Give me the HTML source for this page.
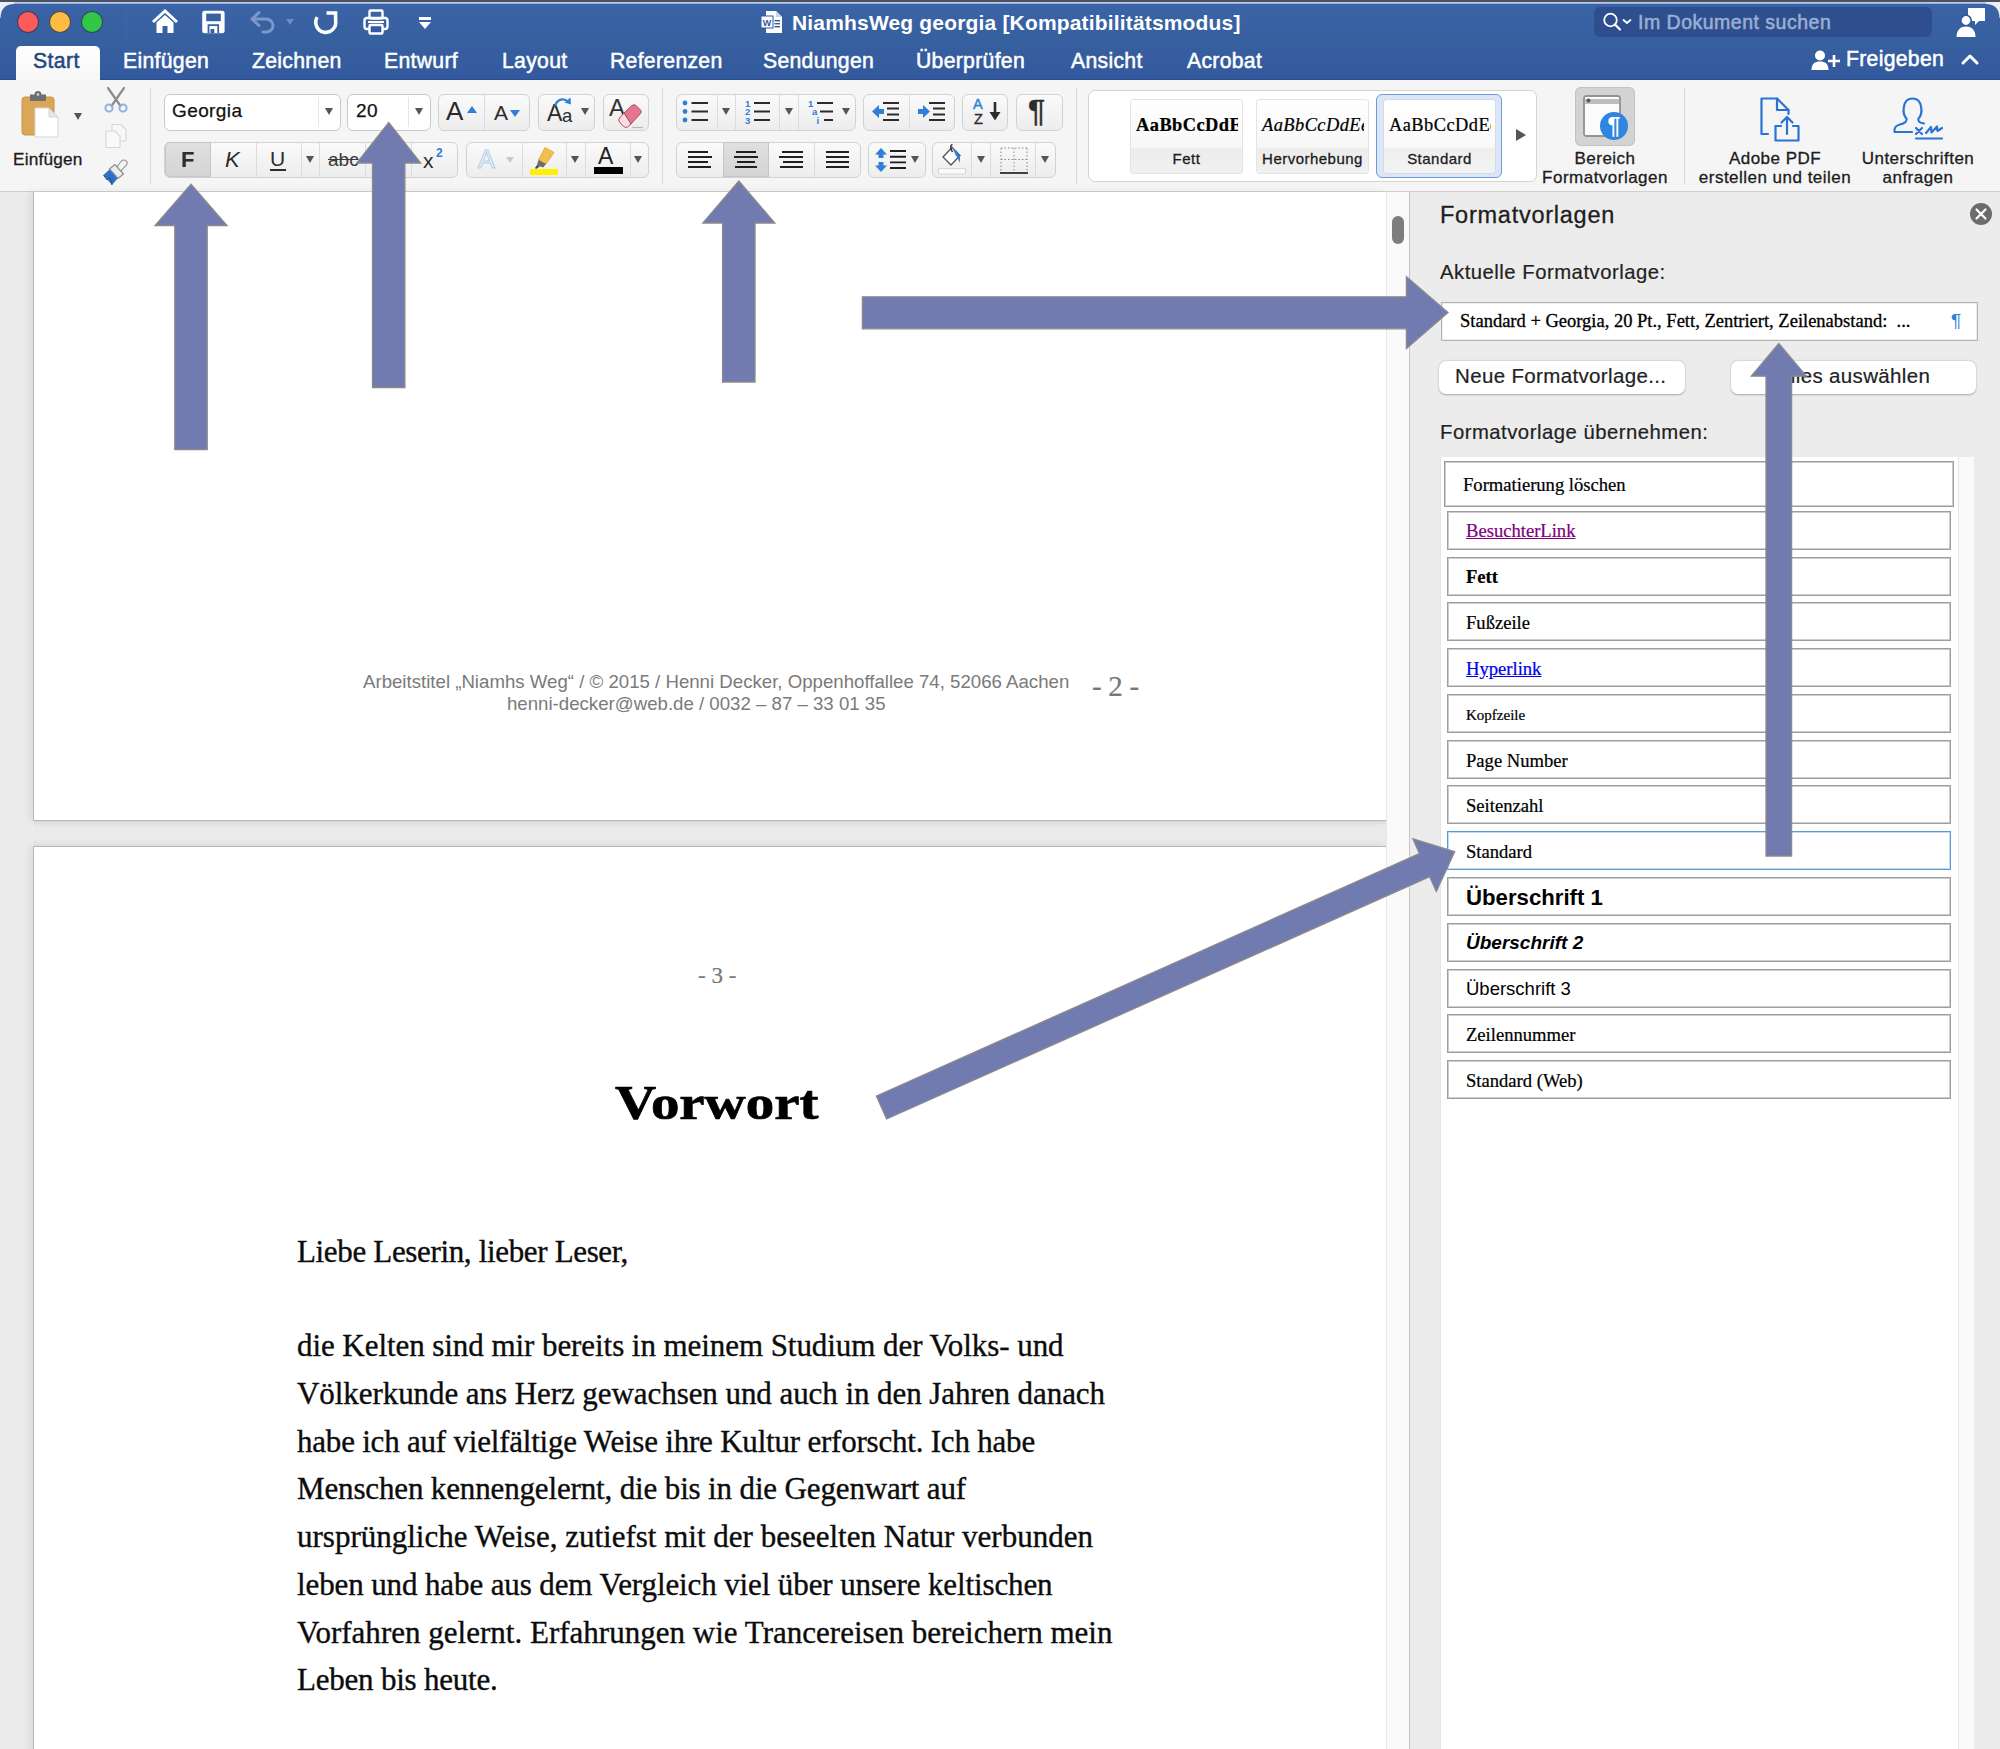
<!DOCTYPE html>
<html><head><meta charset="utf-8">
<style>
html,body{margin:0;padding:0;}
body{width:2000px;height:1749px;position:relative;overflow:hidden;background:#ececec;font-family:"Liberation Sans",sans-serif;color:#1e1e1e;}
.abs,.abs *{position:absolute;}
#app div,#app span,#app svg{position:absolute;}
.t{white-space:nowrap;line-height:1;}
.sans{font-family:"Liberation Sans",sans-serif;}
.serif{font-family:"Liberation Serif",serif;}
/* title bar */
#titlebar{left:0;top:0;width:2000px;height:80px;background:linear-gradient(#3b63a8,#37609f 50%,#33599e);box-shadow:inset 0 -1px 0 #2a4d8c;}
#topline{left:0;top:0;width:2000px;height:3.5px;background:linear-gradient(#4d535e 0,#4d535e 38%,#c9d4ee 45%,#a9bbe4 85%,#5f80bb 100%);}
.tab{top:49.800px;font-size:21.2px;color:#fff;-webkit-text-stroke:0.5px #fff;letter-spacing:0.3px;}
/* ribbon */
#ribbon{left:0;top:80px;width:2000px;height:111px;background:#f5f5f5;}
#ribbonline{left:0;top:191px;width:2000px;height:1px;background:#cfcfcf;}
.grp{background:linear-gradient(#fafafa,#ededed);border:1px solid #d2d2d2;border-radius:6px;box-sizing:border-box;}
.box{background:#fff;border:1px solid #c9c9c9;border-radius:6px;box-sizing:border-box;}
.vsep{width:1px;background:#d9d9d9;}
.div{width:1px;background:#dcdcdc;}
.dd{width:0;height:0;border-left:4.5px solid transparent;border-right:4.5px solid transparent;border-top:7px solid #555;}
.lbl{font-size:17px;color:#1c1c1c;text-align:center;-webkit-text-stroke:0.3px #1c1c1c;letter-spacing:0.48px;}
/* doc */
.page{background:#fff;}
.body{font-family:"Liberation Serif",serif;color:#0c0c0c;font-size:31px;-webkit-text-stroke:0.35px #0c0c0c;}
/* panel */
#panel{left:1410px;top:192px;width:590px;height:1557px;background:#ececec;}
.pl{font-size:19.5px;color:#222;letter-spacing:0.3px;-webkit-text-stroke:0.2px #222;}
.item{left:1447px;width:504px;height:39px;box-sizing:border-box;border:1.4px solid #9d9d9d;box-shadow:inset 0 0 0 1px #cdcdcd;background:#fff;}
.it{left:1466px;font-size:18px;color:#000;}
.serif.t{-webkit-text-stroke:0.22px currentColor;}
</style></head>
<body><div id="app">
<!-- TITLEBAR -->
<!--TITLE-START-->
<div id="titlebar"></div>
<div id="topline"></div>
<!-- rounded corners -->
<svg style="left:0;top:1.5px" width="14" height="16"><path d="M0 0H14V2Q1 2 0.500 16H0Z" fill="#eceef8"/></svg>
<svg style="left:1986px;top:1.5px" width="14" height="16"><path d="M14 0H0V2Q13 2 13.500 16H14Z" fill="#eceef8"/></svg>
<!-- traffic lights -->
<div style="left:18px;top:12px;width:20px;height:20px;border-radius:50%;background:#fc5b57;box-shadow:0 0 0 1px #4a3566"></div>
<div style="left:50px;top:12px;width:20px;height:20px;border-radius:50%;background:#fdbc40;box-shadow:0 0 0 1px #4d4a55"></div>
<div style="left:82px;top:12px;width:20px;height:20px;border-radius:50%;background:#33c748;box-shadow:0 0 0 1px #2c4d5e"></div>
<div style="left:126px;top:8px;width:1px;height:28px;background:#3c68ad"></div>
<!-- home -->
<svg style="left:151px;top:9px" width="28" height="26" viewBox="0 0 28 26"><path d="M2 13 L14 2 L26 13" fill="none" stroke="#fff" stroke-width="3" stroke-linejoin="miter"/><path d="M5.5 13.5V24H11.5V17H16.5V24H22.5V13.5L14 6Z" fill="#fff"/></svg>
<!-- save -->
<svg style="left:201px;top:10px" width="24" height="24" viewBox="0 0 24 24"><rect x="1.2" y="0.8" width="22.4" height="22.4" rx="2.5" fill="#fff"/><rect x="5.2" y="3.6" width="14.6" height="7.6" fill="#3760a3"/><path d="M7.500 23.200V15.200H17.200V23.200" fill="none" stroke="#3760a3" stroke-width="1.800"/><rect x="9.500" y="19" width="3.800" height="4.200" fill="#3760a3"/></svg>
<!-- undo (dim) -->
<svg style="left:249px;top:10px" width="28" height="24" viewBox="0 0 28 24"><path d="M10 2.5 L3 9 L10 15.5 M3 9 H17 A7 6.5 0 0 1 17 22 H14" fill="none" stroke="#7d97c8" stroke-width="3" stroke-linecap="round" stroke-linejoin="round"/></svg>
<div class="dd" style="left:286px;top:19px;border-top-color:#6f8cc0;border-left-width:4px;border-right-width:4px;border-top-width:6px"></div>
<!-- redo -->
<svg style="left:312px;top:9px" width="28" height="27" viewBox="0 0 28 27"><path d="M5.200 8.200A10 10 0 1 0 23.600 11.500V4H14.500" fill="none" stroke="#fff" stroke-width="3.500" stroke-linejoin="miter"/></svg>
<!-- print -->
<svg style="left:362px;top:8px" width="28" height="28" viewBox="0 0 28 28"><rect x="7.5" y="2.5" width="13" height="8" rx="1" fill="none" stroke="#fff" stroke-width="2.4"/><rect x="2.5" y="10" width="23" height="11" rx="2.5" fill="none" stroke="#fff" stroke-width="2.4"/><rect x="7.5" y="17" width="13" height="8.5" rx="1" fill="#2f5aa0" stroke="#fff" stroke-width="2.4"/><rect x="6" y="13" width="16" height="2" fill="#fff"/></svg>
<!-- qat dropdown -->
<div style="left:419px;top:17px;width:12px;height:2.5px;background:#fff"></div>
<div class="dd" style="left:419px;top:22px;border-top-color:#fff;border-left-width:6px;border-right-width:6px;border-top-width:7px"></div>
<!-- doc icon + title -->
<svg style="left:761px;top:10px" width="22" height="24" viewBox="0 0 22 24"><path d="M5 1H15L21 7V23H5Z" fill="#fff"/><path d="M15 1V7H21Z" fill="#c9d6ec"/><rect x="0" y="6" width="12" height="12" fill="#fff" stroke="#2f5aa0" stroke-width="1"/><text x="6" y="15.5" font-family="Liberation Sans" font-weight="bold" font-size="9" fill="#2f5aa0" text-anchor="middle">W</text><rect x="13.5" y="10" width="5.5" height="1.4" fill="#2f5aa0"/><rect x="13.5" y="13" width="5.5" height="1.4" fill="#2f5aa0"/><rect x="13.5" y="16" width="5.5" height="1.4" fill="#2f5aa0"/></svg>
<span class="t" style="left:792px;top:12px;font-size:21px;font-weight:bold;color:#fff;letter-spacing:0.17px">NiamhsWeg georgia [Kompatibilitätsmodus]</span>
<!-- search -->
<div style="left:1594px;top:7px;width:338px;height:30px;border-radius:6px;background:#2e4e8e"></div>
<svg style="left:1601px;top:11px" width="34" height="22" viewBox="0 0 34 22"><circle cx="9.5" cy="9" r="6.3" fill="none" stroke="#fff" stroke-width="1.8"/><path d="M14 13.5L19 18.5" stroke="#fff" stroke-width="2.2" stroke-linecap="round"/><path d="M22.5 9L26 12L29.5 9" fill="none" stroke="#fff" stroke-width="1.8" stroke-linecap="round" stroke-linejoin="round"/></svg>
<span class="t" style="left:1638px;top:13px;font-size:19.5px;color:#9aaed4;letter-spacing:0.5px;-webkit-text-stroke:0.55px #9aaed4">Im Dokument suchen</span>
<!-- share people icon -->
<svg style="left:1955px;top:6px" width="32" height="32" viewBox="0 0 32 32"><path d="M13 2H30V15H24L20 19V15H13Z" fill="#fff"/><circle cx="11" cy="14.5" r="5.2" fill="#fff" stroke="#2f5aa0" stroke-width="1.6"/><path d="M1.5 31C1.5 23.5 6 20.5 11 20.5S20.5 23.5 20.5 31Z" fill="#fff"/></svg>
<!-- tabs -->
<div style="left:16px;top:45.5px;width:84px;height:36px;background:linear-gradient(#ffffff,#f6f6f6);border-radius:5px 5px 0 0"></div>
<span class="t tab" style="left:33px;color:#24467f;-webkit-text-stroke:0.5px #24467f;letter-spacing:0.4px">Start</span>
<span class="t tab" style="left:123px">Einfügen</span>
<span class="t tab" style="left:252px">Zeichnen</span>
<span class="t tab" style="left:384px">Entwurf</span>
<span class="t tab" style="left:502px">Layout</span>
<span class="t tab" style="left:610px">Referenzen</span>
<span class="t tab" style="left:763px">Sendungen</span>
<span class="t tab" style="left:916px">Überprüfen</span>
<span class="t tab" style="left:1071px">Ansicht</span>
<span class="t tab" style="left:1187px">Acrobat</span>
<!-- freigeben -->
<svg style="left:1811px;top:48px" width="30" height="24" viewBox="0 0 30 24"><circle cx="9" cy="7.5" r="5" fill="#fff"/><path d="M0.5 22C0.5 15.5 4 13.5 9 13.5S17.5 15.5 17.5 22Z" fill="#fff"/><path d="M23 7V19M17 13H29" stroke="#fff" stroke-width="2.6"/></svg>
<span class="t tab" style="left:1846px;top:47.600px">Freigeben</span>
<svg style="left:1960px;top:52px" width="20" height="14" viewBox="0 0 20 14"><path d="M3 11L10 4L17 11" fill="none" stroke="#fff" stroke-width="3" stroke-linecap="round" stroke-linejoin="round"/></svg>
<!--TITLE-END-->
<!-- RIBBON -->
<!--RIB1-START-->
<div id="ribbon"></div>
<div id="ribbonline"></div>
<!-- paste -->
<svg style="left:20px;top:90px" width="42" height="50" viewBox="0 0 42 50"><rect x="2" y="7" width="32" height="38" rx="3" fill="#d9a755" stroke="#c79443" stroke-width="1"/><path d="M10 7V4.5H14.5A3.5 3.5 0 0 1 21.500 4.500H26V11H10Z" fill="#6f6f73"/><circle cx="18" cy="4.500" r="1.3" fill="#d9d9d9"/><path d="M15 18H29L38 27V47H15Z" fill="#fff" stroke="#d6d6d6" stroke-width="1"/><path d="M29 18V27H38Z" fill="#e6e6e6" stroke="#d0d0d0" stroke-width=".8"/></svg>
<div class="dd" style="left:74px;top:113px;border-left-width:4px;border-right-width:4px;border-top-width:7px"></div>
<span class="t lbl" style="left:13px;top:151px;font-size:17.200px;letter-spacing:0.2px">Einfügen</span>
<!-- scissors -->
<svg style="left:103px;top:86px" width="26" height="28" viewBox="0 0 26 28"><path d="M5 2L17.500 20M21 2L8.500 20" stroke="#8c8c8c" stroke-width="2.200" stroke-linecap="round"/><circle cx="6" cy="22" r="3.600" fill="none" stroke="#8fb3e0" stroke-width="2"/><circle cx="20" cy="22" r="3.600" fill="none" stroke="#8fb3e0" stroke-width="2"/></svg>
<!-- copy dim -->
<svg style="left:104px;top:123px" width="24" height="26" viewBox="0 0 24 26"><path d="M8 1.500H17L22 6.500V18H8Z" fill="#f7f7f7" stroke="#d7d7d7" stroke-width="1.200"/><path d="M2 8H11L16 13V24.500H2Z" fill="#f9f9f9" stroke="#d7d7d7" stroke-width="1.200"/></svg>
<!-- format painter -->
<svg style="left:101px;top:158px" width="30" height="30" viewBox="0 0 30 30"><path d="M20 3.500A3 3 0 0 1 25.500 7L19 14L15 10.500Z" fill="#f4f4f4" stroke="#9a9a9a" stroke-width="1.200"/><path d="M8.500 11L14 6.500L22.500 16L17 20.500Z" fill="#ececec" stroke="#8c8c8c" stroke-width="1.200"/><path d="M2.500 17L8.500 11.500L16.500 20.500L11 27Z" fill="#2f6fc4"/><path d="M2.500 17L6 22L9 19.500L11 27" fill="none" stroke="#1d4f96" stroke-width="1"/></svg>
<div class="vsep" style="left:150px;top:88px;height:96px"></div>
<!-- font name / size -->
<div class="box" style="left:164px;top:94px;width:177px;height:36.5px"></div>
<span class="t" style="left:172px;top:101px;font-size:19px;color:#111;letter-spacing:0.4px;-webkit-text-stroke:0.25px #111">Georgia</span>
<div class="div" style="left:318px;top:97px;height:30px;background:#e6e6e6"></div>
<div class="dd" style="left:325px;top:108px;border-left-width:4px;border-right-width:4px;border-top-width:7px"></div>
<div class="box" style="left:347px;top:94px;width:84px;height:36.5px"></div>
<span class="t" style="left:356px;top:101px;font-size:19px;color:#111;letter-spacing:0.4px;-webkit-text-stroke:0.25px #111">20</span>
<div class="div" style="left:408px;top:97px;height:30px;background:#e6e6e6"></div>
<div class="dd" style="left:415px;top:108px;border-left-width:4px;border-right-width:4px;border-top-width:7px"></div>
<!-- grow/shrink -->
<div class="grp" style="left:438px;top:94px;width:92px;height:36.5px"></div>
<div class="div" style="left:484px;top:95px;height:34.500px"></div>
<span class="t" style="left:446px;top:98px;font-size:26px;color:#2a2a2a">A</span>
<div style="left:467px;top:106px;width:0;height:0;border-left:5.500px solid transparent;border-right:5.500px solid transparent;border-bottom:7px solid #2f7fd6"></div>
<span class="t" style="left:494px;top:102px;font-size:21px;color:#2a2a2a">A</span>
<div style="left:510px;top:110px;width:0;height:0;border-left:5.500px solid transparent;border-right:5.500px solid transparent;border-top:7px solid #2f7fd6"></div>
<!-- Aa -->
<div class="grp" style="left:538px;top:94px;width:57px;height:36.5px"></div>
<span class="t" style="left:547px;top:102px;font-size:23px;color:#2a2a2a">A</span><span class="t" style="left:562px;top:107px;font-size:18.500px;color:#2a2a2a">a</span>
<svg style="left:552px;top:95px" width="22" height="14" viewBox="0 0 22 14"><path d="M3 11C5 4 12 2.500 16 6.500" fill="none" stroke="#2f7fd6" stroke-width="2.200"/><path d="M12.500 7.500L19 9.500L18.500 2.500Z" fill="#2f7fd6"/></svg>
<div class="dd" style="left:581px;top:108px;border-left-width:4px;border-right-width:4px;border-top-width:7px"></div>
<!-- clear format -->
<div class="grp" style="left:603px;top:94px;width:46px;height:36.5px"></div>
<span class="t" style="left:609px;top:96px;font-size:24px;color:#333">A</span>
<svg style="left:610px;top:100px" width="34" height="30" viewBox="0 0 34 30"><path d="M14 13L22 5.500Q24 4 26 5.500L30.500 10Q32 12 30.500 13.500L21 24Z" fill="#e2788b" stroke="#b6485d" stroke-width="1"/><path d="M14 13L21 24L17.500 27Q15.500 28 13.500 26.500L9.500 22Q8 20 9.500 18Z" fill="#f6dfe3" stroke="#b6485d" stroke-width="1"/><path d="M22 27.500H33" stroke="#b9b9b9" stroke-width="1.200"/></svg>
<!-- row 2: B I U -->
<div class="grp" style="left:164px;top:141.700px;width:294px;height:36.300px"></div>
<div style="left:165px;top:142.200px;width:46px;height:35.300px;background:linear-gradient(#e0e0e0,#d4d4d4);border-radius:5px 0 0 5px;box-shadow:inset 0 0 0 1px #c6c6c6"></div>
<div class="div" style="left:256px;top:142.700px;height:34.300px"></div>
<div class="div" style="left:301px;top:142.700px;height:34.300px"></div>
<div class="div" style="left:319px;top:142.700px;height:34.300px"></div>
<div class="div" style="left:365px;top:142.700px;height:34.300px"></div>
<div class="div" style="left:411px;top:142.700px;height:34.300px"></div>
<span class="t" style="left:181px;top:149px;font-size:22px;font-weight:bold;color:#2c2c2c">F</span>
<span class="t" style="left:225px;top:149px;font-size:22px;font-style:italic;color:#2c2c2c">K</span>
<span class="t" style="left:270px;top:148px;font-size:21px;color:#2c2c2c">U</span>
<div style="left:270px;top:169px;width:16px;height:2px;background:#2c2c2c"></div>
<div class="dd" style="left:306px;top:156px;border-left-width:4px;border-right-width:4px;border-top-width:7px"></div>
<span class="t" style="left:328px;top:150px;font-size:19px;color:#3a3a3a;text-decoration:line-through">abc</span>
<span class="t" style="left:377px;top:150px;font-size:21px;color:#2c2c2c">x</span><span class="t" style="left:389px;top:161px;font-size:12px;font-weight:bold;color:#2f7fd6">2</span>
<span class="t" style="left:423px;top:150px;font-size:21px;color:#2c2c2c">x</span><span class="t" style="left:436px;top:147px;font-size:12px;font-weight:bold;color:#2f7fd6">2</span>
<!-- text effects / highlight / color -->
<div class="grp" style="left:466px;top:141.700px;width:183px;height:36.300px"></div>
<div class="div" style="left:522px;top:142.700px;height:34.300px"></div>
<div class="div" style="left:566px;top:142.700px;height:34.300px"></div>
<div class="div" style="left:585px;top:142.700px;height:34.300px"></div>
<div class="div" style="left:630px;top:142.700px;height:34.300px"></div>
<span class="t" style="left:478px;top:147px;font-size:25px;color:#fff;-webkit-text-stroke:1.200px #b9cfee">A</span>
<div class="dd" style="left:506px;top:157px;border-top-color:#c9c9c9;border-left-width:4px;border-right-width:4px;border-top-width:6px"></div>
<svg style="left:528px;top:145px" width="32" height="30" viewBox="0 0 32 30"><path d="M17 2.500L26 7.500L18 19L10.500 15Z" fill="#f2c04c" stroke="#d9a233" stroke-width=".8"/><path d="M10.500 15L18 19L15 22.500L9 20Z" fill="#6b6b6b"/><path d="M9 20L12 21.500L8 24L7 23Z" fill="#4a4a4a"/><rect x="2" y="24" width="28" height="6" fill="#ffef00"/></svg>
<div class="dd" style="left:571px;top:156px;border-left-width:4px;border-right-width:4px;border-top-width:7px"></div>
<span class="t" style="left:598px;top:145px;font-size:23px;color:#222">A</span>
<div style="left:594px;top:167px;width:29px;height:7px;background:#000"></div>
<div class="dd" style="left:634px;top:156px;border-left-width:4px;border-right-width:4px;border-top-width:7px"></div>
<div class="vsep" style="left:662px;top:88px;height:96px"></div>
<!--RIB1-END-->
<!--RIB2-START-->
<!-- list groups -->
<div class="grp" style="left:676px;top:94px;width:180px;height:36.5px"></div>
<div class="div" style="left:717px;top:95px;height:34.500px"></div>
<div class="div" style="left:735px;top:95px;height:34.500px"></div>
<div class="div" style="left:779px;top:95px;height:34.500px"></div>
<div class="div" style="left:798px;top:95px;height:34.500px"></div>
<svg style="left:681px;top:99px" width="30" height="26" viewBox="0 0 30 26"><g fill="#2f7fd6"><circle cx="4" cy="4" r="2.400"/><circle cx="4" cy="12.500" r="2.400"/><circle cx="4" cy="21" r="2.400"/></g><g stroke="#2c2c2c" stroke-width="1.800"><path d="M10.500 4H27M10.500 12.500H27M10.500 21H27"/></g></svg>
<div class="dd" style="left:722px;top:108px;border-left-width:4px;border-right-width:4px;border-top-width:7px"></div>
<svg style="left:744px;top:99px" width="30" height="26" viewBox="0 0 30 26"><g font-family="Liberation Sans" font-weight="bold" font-size="9.500" fill="#2f7fd6"><text x="1" y="7.500">1</text><text x="1" y="16">2</text><text x="1" y="24.500">3</text></g><g stroke="#2c2c2c" stroke-width="1.800"><path d="M10 4H26M10 12.500H26M10 21H26"/></g></svg>
<div class="dd" style="left:785px;top:108px;border-left-width:4px;border-right-width:4px;border-top-width:7px"></div>
<svg style="left:807px;top:99px" width="30" height="26" viewBox="0 0 30 26"><g font-family="Liberation Sans" font-weight="bold" font-size="9.500" fill="#2f7fd6"><text x="1" y="7.500">1</text><text x="5" y="16">a</text><text x="9.500" y="24.500">i</text></g><g stroke="#2c2c2c" stroke-width="1.800"><path d="M10 4H26M13 12.500H26M17 21H26"/></g></svg>
<div class="dd" style="left:842px;top:108px;border-left-width:4px;border-right-width:4px;border-top-width:7px"></div>
<!-- indent -->
<div class="grp" style="left:863px;top:94px;width:92px;height:36.5px"></div>
<div class="div" style="left:909px;top:95px;height:34.500px"></div>
<svg style="left:871px;top:100px" width="30" height="24" viewBox="0 0 30 24"><path d="M1 11.500L8 5V9H13V14H8V18Z" fill="#2f7fd6"/><g stroke="#2c2c2c" stroke-width="1.800"><path d="M12 3H28M16 8.500H28M16 14.500H28M12 20H28"/></g></svg>
<svg style="left:917px;top:100px" width="30" height="24" viewBox="0 0 30 24"><path d="M13 11.500L6 5V9H1V14H6V18Z" fill="#2f7fd6"/><g stroke="#2c2c2c" stroke-width="1.800"><path d="M12 3H28M16 8.500H28M16 14.500H28M12 20H28"/></g></svg>
<!-- sort -->
<div class="grp" style="left:962px;top:94px;width:46px;height:36.5px"></div>
<span class="t" style="left:973px;top:97px;font-size:14.500px;color:#2f7fd6;-webkit-text-stroke:0.4px #2f7fd6">A</span>
<span class="t" style="left:974px;top:112px;font-size:14.500px;color:#2c2c2c;-webkit-text-stroke:0.4px #2c2c2c">Z</span>
<svg style="left:988px;top:101px" width="14" height="22" viewBox="0 0 14 22"><path d="M7 1V13" stroke="#2c2c2c" stroke-width="2.600"/><path d="M1.500 11L7 19.500L12.500 11Z" fill="#2c2c2c"/></svg>
<!-- pilcrow -->
<div class="grp" style="left:1016px;top:94px;width:47px;height:36.5px"></div>
<span class="t" style="left:1028px;top:95px;font-size:32px;color:#2c2c2c;-webkit-text-stroke:0.5px #2c2c2c">¶</span>
<!-- align row -->
<div class="grp" style="left:676px;top:141.700px;width:185px;height:36.300px"></div>
<div style="left:723px;top:142.200px;width:46px;height:35.300px;background:linear-gradient(#e0e0e0,#d4d4d4);box-shadow:inset 0 0 0 1px #c6c6c6"></div>
<div class="div" style="left:814px;top:142.700px;height:34.300px"></div>
<svg style="left:687px;top:150px" width="26" height="20" viewBox="0 0 26 20"><g stroke="#1f1f1f" stroke-width="1.900"><path d="M1 2H21M1 7H25M1 12H21M1 17H24"/></g></svg>
<svg style="left:733px;top:150px" width="26" height="20" viewBox="0 0 26 20"><g stroke="#1f1f1f" stroke-width="1.900"><path d="M3 2H23M1 7H25M4 12H22M2 17H24"/></g></svg>
<svg style="left:778px;top:150px" width="26" height="20" viewBox="0 0 26 20"><g stroke="#1f1f1f" stroke-width="1.900"><path d="M4 2H25M1 7H25M5 12H25M2 17H25"/></g></svg>
<svg style="left:825px;top:150px" width="26" height="20" viewBox="0 0 26 20"><g stroke="#1f1f1f" stroke-width="1.900"><path d="M1 2H24M1 7H24M1 12H24M1 17H24"/></g></svg>
<!-- line spacing -->
<div class="grp" style="left:868px;top:141.700px;width:58px;height:36.300px"></div>
<svg style="left:874px;top:147px" width="36" height="26" viewBox="0 0 36 26"><path d="M7 1L13 7.500H9.500V11H4.500V7.500H1Z M7 25L13 18.500H9.500V15H4.500V18.500H1Z" fill="#2f7fd6"/><g stroke="#1f1f1f" stroke-width="1.900"><path d="M16 4H32M16 9.700H32M16 15.400H32M16 21H32"/></g></svg>
<div class="dd" style="left:911px;top:156px;border-left-width:4px;border-right-width:4px;border-top-width:7px"></div>
<!-- shading -->
<div class="grp" style="left:932px;top:141.700px;width:124px;height:36.300px"></div>
<div class="div" style="left:971px;top:142.700px;height:34.300px"></div>
<div class="div" style="left:990px;top:142.700px;height:34.300px"></div>
<div class="div" style="left:1035px;top:142.700px;height:34.300px"></div>
<svg style="left:938px;top:143px" width="30" height="34" viewBox="0 0 30 34"><path d="M5 14L14 4.500L22 12.500L13 22Z" fill="#fff" stroke="#555" stroke-width="1.300"/><path d="M14.500 1.500Q12 2 13 6L14.500 9" fill="none" stroke="#333" stroke-width="1.500"/><path d="M15 6Q23 8 22 20Q19.500 14 17.500 12Z" fill="#2f7fd6"/><rect x="0.500" y="25.500" width="27" height="5.500" fill="#fafafa" stroke="#d8d8d8" stroke-width="1"/></svg>
<div class="dd" style="left:977px;top:156px;border-left-width:4px;border-right-width:4px;border-top-width:7px"></div>
<svg style="left:999px;top:146px" width="30" height="30" viewBox="0 0 30 30"><g stroke="#8a8a8a" stroke-width="1" stroke-dasharray="1.500 2"><path d="M2 2H28M2 2V26M28 2V26M15 2V26M2 13.500H28"/></g><path d="M1 27H29" stroke="#2c2c2c" stroke-width="1.800"/></svg>
<div class="dd" style="left:1041px;top:156px;border-left-width:4px;border-right-width:4px;border-top-width:7px"></div>
<div class="vsep" style="left:1076px;top:88px;height:96px"></div>
<!-- styles gallery -->
<div class="box" style="left:1088px;top:90px;width:449px;height:92px;border-color:#d4d4d4;border-radius:7px"></div>
<div style="left:1131px;top:100px;width:111px;height:73px;background:linear-gradient(#ffffff,#f7f7f7 65%,#ececec 66%,#f1f1f1);border-radius:3px;box-shadow:0 0 0 1px #e3e3e3"></div>
<div style="left:1257px;top:100px;width:111px;height:73px;background:linear-gradient(#ffffff,#f7f7f7 65%,#ececec 66%,#f1f1f1);border-radius:3px;box-shadow:0 0 0 1px #e3e3e3"></div>
<div style="left:1376px;top:94px;width:126px;height:84px;background:#dbe6f6;border:1.500px solid #6f9bd8;border-radius:6px;box-sizing:border-box"></div>
<div style="left:1384px;top:100px;width:111px;height:73px;background:linear-gradient(#ffffff,#f9f9f9 65%,#efefef 66%,#f3f3f3);border-radius:3px;box-shadow:0 0 0 1px #d5dbe6"></div>
<div style="left:1131px;top:100px;width:107px;height:48px;overflow:hidden"><span class="t serif" style="left:5px;top:15.500px;font-size:18.400px;font-weight:bold;color:#000;letter-spacing:0.45px">AaBbCcDdEe</span></div>
<div style="left:1257px;top:100px;width:107px;height:48px;overflow:hidden"><span class="t serif" style="left:5px;top:15.500px;font-size:18.400px;font-style:italic;color:#000;letter-spacing:0.45px">AaBbCcDdEeF</span></div>
<div style="left:1384px;top:100px;width:107px;height:48px;overflow:hidden"><span class="t serif" style="left:5px;top:15.500px;font-size:18.400px;color:#000;letter-spacing:0.45px">AaBbCcDdEeF</span></div>
<span class="t lbl" style="left:1131px;top:151px;width:111px;font-size:15px">Fett</span>
<span class="t lbl" style="left:1257px;top:151px;width:111px;font-size:15px">Hervorhebung</span>
<span class="t lbl" style="left:1384px;top:151px;width:111px;font-size:15px">Standard</span>
<div style="left:1516px;top:129px;width:0;height:0;border-top:6px solid transparent;border-bottom:6px solid transparent;border-left:10px solid #555"></div>
<!-- Bereich Formatvorlagen -->
<div style="left:1575px;top:87px;width:60px;height:59px;background:#d3d3d3;border-radius:6px;box-shadow:inset 0 0 0 1px #c3c3c3"></div>
<svg style="left:1580px;top:92px" width="52" height="52" viewBox="0 0 52 52"><rect x="4" y="4" width="36" height="40" rx="2.500" fill="#fbfbfb" stroke="#8f8f8f" stroke-width="1.300"/><path d="M4 9.500H40" stroke="#bdbdbd" stroke-width="5"/><rect x="4" y="4" width="36" height="40" rx="2.500" fill="none" stroke="#8f8f8f" stroke-width="1.300"/><circle cx="8.500" cy="8.500" r="2" fill="#555"/><circle cx="34" cy="34" r="14" fill="#2f86e0"/><text x="34" y="42" font-family="Liberation Sans" font-weight="bold" font-size="23" fill="#fff" text-anchor="middle">¶</text></svg>
<span class="t lbl" style="left:1535px;top:150px;width:140px">Bereich</span>
<span class="t lbl" style="left:1535px;top:169px;width:140px">Formatvorlagen</span>
<div class="vsep" style="left:1684px;top:88px;height:96px"></div>
<!-- Adobe PDF -->
<svg style="left:1755px;top:94px" width="50" height="52" viewBox="0 0 50 52"><g fill="none" stroke="#2a72d6" stroke-width="2.200" stroke-linejoin="round" stroke-linecap="round"><path d="M13 40H6.500V4.500H22L33.500 16V20"/><path d="M22 4.500V16H33.500"/><path d="M26 32H20.500V46.500H43.500V32H38"/><path d="M32 40V23M26.500 28.500L32 23L37.500 28.500"/></g></svg>
<span class="t lbl" style="left:1690px;top:150px;width:170px">Adobe PDF</span>
<span class="t lbl" style="left:1690px;top:169px;width:170px">erstellen und teilen</span>
<!-- Unterschriften -->
<svg style="left:1890px;top:94px" width="56" height="50" viewBox="0 0 56 50"><g fill="none" stroke="#2a72d6" stroke-width="2.200" stroke-linejoin="round" stroke-linecap="round"><path d="M22 38H4.500C4 33 6 31.500 10 30.500C15 29.500 17.500 27 16.500 24.500C12 20 12 4.500 22.500 4.500C33 4.500 33 20 28.500 24.500C27.500 27 29.500 29 34 29.500"/><path d="M26 34L32 40M32 34L26 40"/><path d="M36 39L41 33L41.500 38.500L47 32.500L47.500 37L52 34"/><path d="M26 44.500H52"/></g></svg>
<span class="t lbl" style="left:1838px;top:150px;width:160px">Unterschriften</span>
<span class="t lbl" style="left:1838px;top:169px;width:160px">anfragen</span>
<!--RIB2-END-->
<!-- DOC -->
<!--DOC-START-->
<!-- doc area -->
<div style="left:0;top:192px;width:1410px;height:1557px;background:#ececec"></div>
<div style="left:34px;top:819px;width:1352px;height:28px;background:linear-gradient(#dcdcdc,#e9e9e9 25%,#ececec 60%,#e6e6e6)"></div>
<div class="page" style="left:33px;top:192px;width:1353px;height:627.500px;border:1px solid #b7b7b7;border-right:none;border-top:none;box-sizing:content-box;box-shadow:-4px 0 7px rgba(0,0,0,.07)"></div>
<div class="page" style="left:33px;top:845.500px;width:1353px;height:920px;border:1px solid #b7b7b7;border-right:none;box-shadow:-4px 0 7px rgba(0,0,0,.07)"></div>
<div style="left:1386px;top:192px;width:24px;height:1557px;background:#fafafa;box-shadow:inset 1px 0 0 #e8e8e8"></div>
<div style="left:1409px;top:192px;width:1.5px;height:1557px;background:#c4c4c4"></div>
<div style="left:1392px;top:215.500px;width:12px;height:28.500px;border-radius:6px;background:#7d7d7d"></div>
<span class="t" style="left:363px;top:672.5px;font-size:18.65px;color:#7a7a7a">Arbeitstitel „Niamhs Weg“ / © 2015 / Henni Decker, Oppenhoffallee 74, 52066 Aachen</span>
<span class="t" style="left:507px;top:694.5px;font-size:18.65px;color:#7a7a7a">henni-decker@web.de / 0032 – 87 – 33 01 35</span>
<span class="t serif" style="left:1092px;top:672px;font-size:29px;color:#777;letter-spacing:-0.3px">- 2 -</span>
<span class="t serif" style="left:698px;top:964px;font-size:23px;color:#777">- 3 -</span>
<span class="t serif" style="left:615px;top:1079px;font-size:48px;font-weight:bold;color:#000;-webkit-text-stroke:0.7px #000;transform-origin:0 0;transform:scaleX(1.186)">Vorwort</span>
<span class="t body" style="left:297px;top:1236.0px;letter-spacing:-0.339px">Liebe Leserin, lieber Leser,</span>
<span class="t body" style="left:297px;top:1330.0px;letter-spacing:-0.063px">die Kelten sind mir bereits in meinem Studium der Volks- und</span>
<span class="t body" style="left:297px;top:1378.0px;letter-spacing:-0.062px">Völkerkunde ans Herz gewachsen und auch in den Jahren danach</span>
<span class="t body" style="left:297px;top:1425.5px;letter-spacing:-0.210px">habe ich auf vielfältige Weise ihre Kultur erforscht. Ich habe</span>
<span class="t body" style="left:297px;top:1473.0px;letter-spacing:-0.146px">Menschen kennengelernt, die bis in die Gegenwart auf</span>
<span class="t body" style="left:297px;top:1521.0px;letter-spacing:0.003px">ursprüngliche Weise, zutiefst mit der beseelten Natur verbunden</span>
<span class="t body" style="left:297px;top:1568.5px;letter-spacing:-0.115px">leben und habe aus dem Vergleich viel über unsere keltischen</span>
<span class="t body" style="left:297px;top:1616.5px;letter-spacing:0.014px">Vorfahren gelernt. Erfahrungen wie Trancereisen bereichern mein</span>
<span class="t body" style="left:297px;top:1664.0px;letter-spacing:-0.219px">Leben bis heute.</span>
<!--DOC-END-->
<!-- PANEL -->
<!--PANEL-START-->
<div id="panel"></div>
<span class="t" style="left:1440px;top:203.5px;font-size:23.5px;color:#1d1d1d;letter-spacing:0.75px;-webkit-text-stroke:0.3px #1d1d1d">Formatvorlagen</span>
<div style="left:1970px;top:203px;width:22px;height:22px;border-radius:50%;background:#6c6c6c"></div>
<svg style="left:1970px;top:203px" width="22" height="22" viewBox="0 0 22 22"><path d="M6.5 6.5L15.5 15.5M15.5 6.500L6.500 15.500" stroke="#fff" stroke-width="2.200" stroke-linecap="round"/></svg>
<span class="t pl" style="left:1440px;top:262px;font-size:20.3px;letter-spacing:0.5px">Aktuelle Formatvorlage:</span>
<div style="left:1441px;top:302px;width:537px;height:39px;background:#fff;border:1.5px solid #b4b4b4;box-sizing:border-box;box-shadow:inset 0 0 0 1px #ededed"></div>
<span class="t serif" style="left:1460px;top:312.3px;font-size:18.5px;color:#000;-webkit-text-stroke:0.3px #000">Standard + Georgia, 20 Pt., Fett, Zentriert, Zeilenabstand:&nbsp; ...</span>
<span class="t" style="left:1951px;top:311px;font-size:19px;color:#2f7fd6">¶</span>
<div style="left:1439px;top:361px;width:246px;height:33px;background:#fff;border-radius:7px;box-shadow:0 0.5px 2px rgba(0,0,0,.3)"></div>
<span class="t pl" style="left:1455px;top:366px;font-size:20.5px;letter-spacing:0.35px;color:#222">Neue Formatvorlage...</span>
<div style="left:1731px;top:361px;width:245px;height:33px;background:#fff;border-radius:7px;box-shadow:0 0.5px 2px rgba(0,0,0,.3)"></div>
<span class="t pl" style="left:1731px;width:245px;text-align:center;top:366px;font-size:20.5px;letter-spacing:0.35px;color:#222">Alles auswählen</span>
<span class="t pl" style="left:1440px;top:422px;font-size:20.3px;letter-spacing:0.5px">Formatvorlage übernehmen:</span>
<div style="left:1441px;top:457px;width:517px;height:1300px;background:#fff;box-shadow:-1px 0 0 #e4e4e4"></div>
<div style="left:1958px;top:457px;width:17px;height:1300px;background:#fafafa;box-shadow:inset 1px 0 0 #e6e6e6, inset -1px 0 0 #e9e9e9"></div>
<div class="item" style="left:1444px;top:461px;width:510px;height:46px"></div>
<span class="t serif" style="left:1463px;top:476.2px;font-size:18.6px;color:#000;">Formatierung löschen</span>
<div class="item" style="top:510.8px"></div>
<span class="t serif" style="left:1466px;top:521.5px;font-size:18.6px;color:#000;color:#800080;text-decoration:underline">BesuchterLink</span>
<div class="item" style="top:556.6px"></div>
<span class="t serif" style="left:1466px;top:567.8px;font-size:18.6px;color:#000;font-weight:bold">Fett</span>
<div class="item" style="top:602.3px"></div>
<span class="t serif" style="left:1466px;top:613.8px;font-size:18.6px;color:#000;">Fußzeile</span>
<div class="item" style="top:648.1px"></div>
<span class="t serif" style="left:1466px;top:659.8px;font-size:18.6px;color:#000;color:#0000ee;text-decoration:underline">Hyperlink</span>
<div class="item" style="top:693.9px"></div>
<span class="t serif" style="left:1466px;top:708.4px;font-size:15px;color:#000;">Kopfzeile</span>
<div class="item" style="top:739.7px"></div>
<span class="t serif" style="left:1466px;top:751.6px;font-size:18.6px;color:#000;">Page Number</span>
<div class="item" style="top:785.4px"></div>
<span class="t serif" style="left:1466px;top:797.3px;font-size:18.6px;color:#000;">Seitenzahl</span>
<div class="item" style="top:831.2px;border-color:#5b9bd5;box-shadow:inset 0 0 0 1px #c5dbf2"></div>
<span class="t serif" style="left:1466px;top:842.9px;font-size:18.6px;color:#000;">Standard</span>
<div class="item" style="top:877.0px"></div>
<span class="t sans" style="left:1466px;top:887.4px;font-size:22.2px;color:#000;font-weight:bold">Überschrift 1</span>
<div class="item" style="top:922.7px"></div>
<span class="t sans" style="left:1466px;top:933.3px;font-size:19px;color:#000;font-weight:bold;font-style:italic">Überschrift 2</span>
<div class="item" style="top:968.5px"></div>
<span class="t sans" style="left:1466px;top:980.0px;font-size:18.5px;color:#000;">Überschrift 3</span>
<div class="item" style="top:1014.3px"></div>
<span class="t serif" style="left:1466px;top:1026.2px;font-size:18.6px;color:#000;">Zeilennummer</span>
<div class="item" style="top:1060.0px"></div>
<span class="t serif" style="left:1466px;top:1071.9px;font-size:18.6px;color:#000;">Standard (Web)</span>
<!--PANEL-END-->
<!-- ARROWS -->
<svg id="arrows" width="2000" height="1749" style="left:0;top:0" viewBox="0 0 2000 1749"><g fill="#727bb0" stroke="#8a8a8a" stroke-width="1.3" stroke-linejoin="miter"><path d="M191 184.3L227 225.5H207.2V449.5H174.8V225.5H155Z"/><path d="M388.7 122.5L420.7 163H404.9V387.5H372.5V163H356.7Z"/><path d="M738.8 181L774.8 223H755.0V382H722.5999999999999V223H702.8Z"/><path d="M1778.8 343.4L1806.3 376.2H1791.6V856H1766.0V376.2H1751.3Z"/><path d="M862.4 296.8H1406.4V276.6L1448 312.5L1406.4 348.6V328.8H862.4Z"/><path d="M876.4 1096.0L1419.4 853.6L1412.9 838.9L1454.7 851.7L1436.3 891.4L1429.7 876.7L886.6 1119.0Z"/></g></svg>
</div></body></html>
